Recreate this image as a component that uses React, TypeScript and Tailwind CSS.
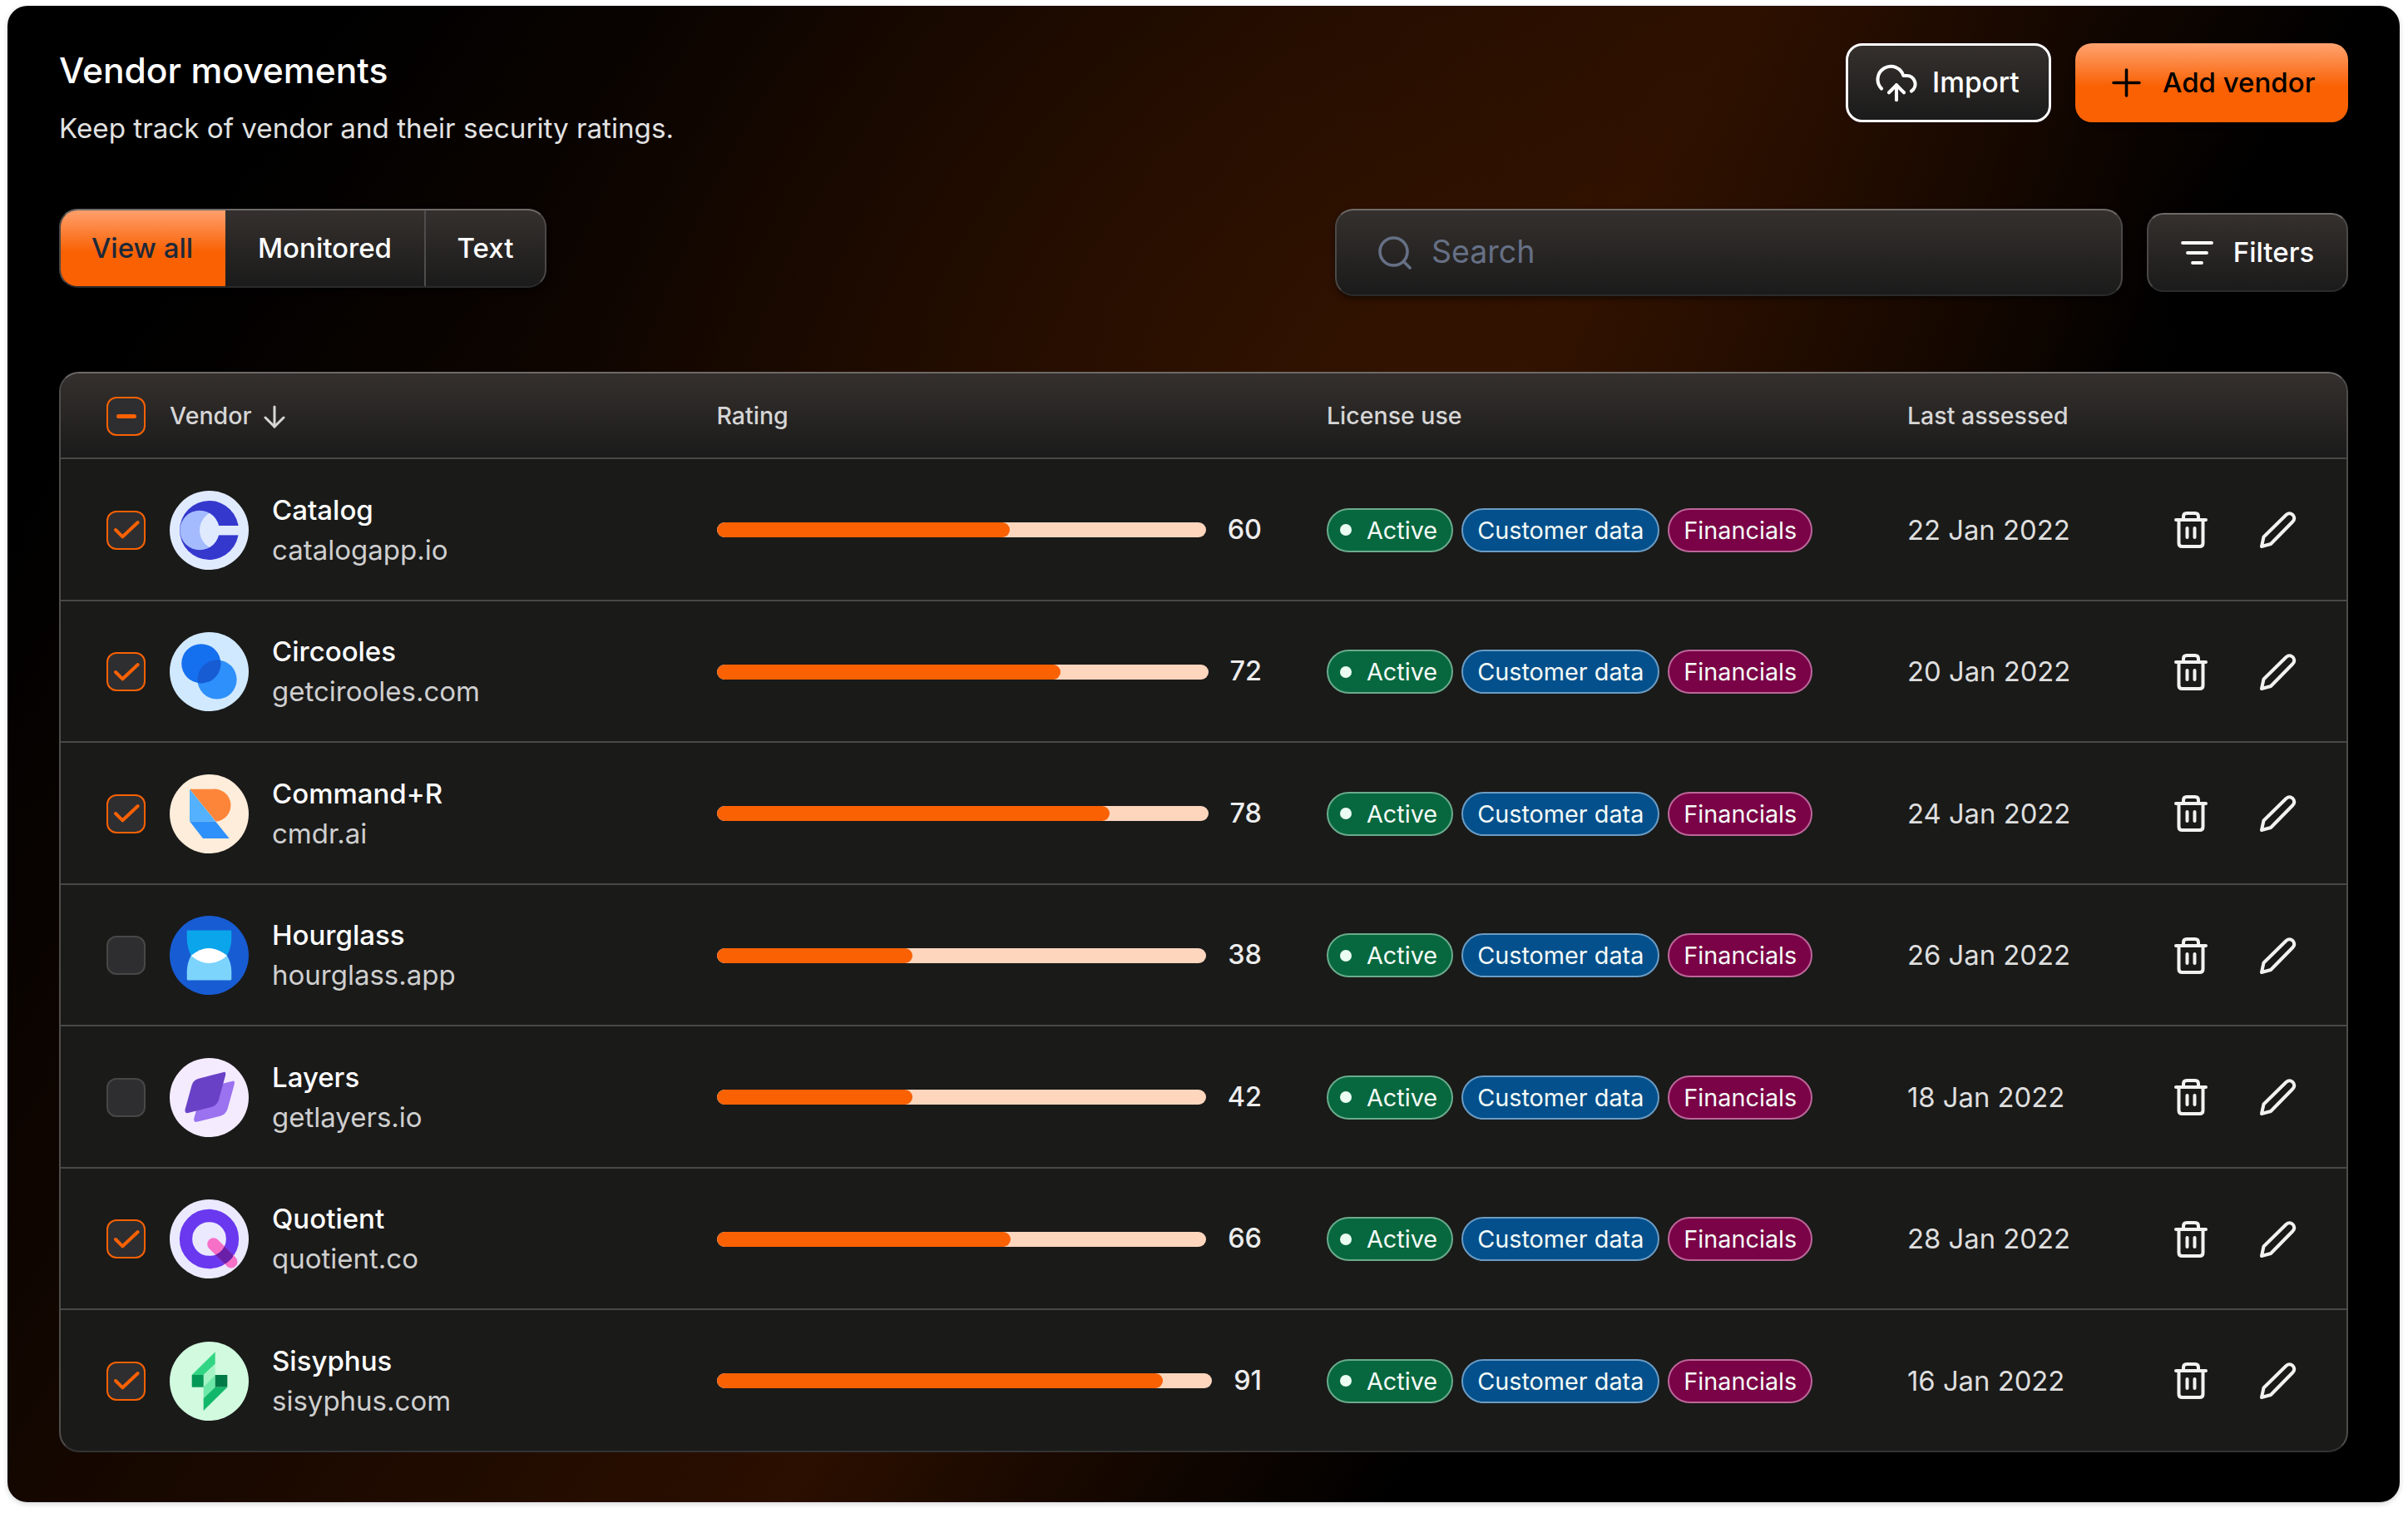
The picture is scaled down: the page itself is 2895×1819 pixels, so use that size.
import { CloudUpload, Plus } from "lucide-react";

const rows = [
  { name: "Catalog", site: "catalogapp.io", rating: 60, fill: 60, date: "22 Jan 2022", checked: true, logo: "catalog" },
  { name: "Circooles", site: "getcirooles.com", rating: 72, fill: 70, date: "20 Jan 2022", checked: true, logo: "circooles" },
  { name: "Command+R", site: "cmdr.ai", rating: 78, fill: 80, date: "24 Jan 2022", checked: true, logo: "command" },
  { name: "Hourglass", site: "hourglass.app", rating: 38, fill: 40, date: "26 Jan 2022", checked: false, logo: "hourglass" },
  { name: "Layers", site: "getlayers.io", rating: 42, fill: 40, date: "18 Jan 2022", checked: false, logo: "layers" },
  { name: "Quotient", site: "quotient.co", rating: 66, fill: 60, date: "28 Jan 2022", checked: true, logo: "quotient" },
  { name: "Sisyphus", site: "sisyphus.com", rating: 91, fill: 90, date: "16 Jan 2022", checked: true, logo: "sisyphus" },
];

const Logo = ({ kind }: { kind: string }) => {
  const bg: Record<string, string> = {
    catalog: "#e0eaff",
    circooles: "#d1e9ff",
    command: "#feedda",
    hourglass: "#175cd3",
    layers: "#f4ebff",
    quotient: "#ebe9fe",
    sisyphus: "#d1fadf",
  };
  return (
    <svg width="95" height="95" viewBox="0 0 95 95" className="shrink-0">
      <circle cx="47.5" cy="47.5" r="47.5" fill={bg[kind]} />
      {kind === "catalog" && (
        <>
          <clipPath id="cat-clip">
            <circle cx="36" cy="47.5" r="23.7" />
          </clipPath>
          <circle cx="47.5" cy="47.5" r="35.5" fill="#3538cd" />
          <circle cx="36" cy="47.5" r="23.7" fill="#a4bcfd" />
          <circle cx="59.7" cy="47.5" r="23.7" fill="#e0eaff" clipPath="url(#cat-clip)" />
          <rect x="58" y="42" width="28" height="11.4" fill="#e0eaff" />
        </>
      )}
      {kind === "circooles" && (
        <>
          <clipPath id="cir-clip">
            <circle cx="37.8" cy="37.8" r="23.6" />
          </clipPath>
          <circle cx="57" cy="57" r="23.6" fill="#2e90fa" />
          <circle cx="37.8" cy="37.8" r="23.6" fill="#1570ef" />
          <circle cx="57" cy="57" r="23.6" fill="#175cd3" clipPath="url(#cir-clip)" />
        </>
      )}
      {kind === "command" && (
        <>
          <path d="M24 17.7H52A19.5 19.5 0 0 1 55.7 56.7Z" fill="#fd853a" />
          <path d="M24 17.7L55.3 56.7H24Z" fill="#53b1fd" />
          <path d="M24.3 56.7L40 77H71.7L55.3 56.7Z" fill="#2e90fa" />
        </>
      )}
      {kind === "hourglass" && (
        <>
          <path d="M22 17.6H73Q74.3 17.6 74.3 19V28Q74 38 69 48Q47.5 66 25.7 48Q21 38 20.7 28V19Q20.7 17.6 22 17.6Z" fill="#0ba5ec" />
          <path d="M25.7 48Q47.5 30 69 48Q74 56 74.3 67V76Q74.3 77.4 73 77.4H22Q20.7 77.4 20.7 76V67Q21 56 25.7 48Z" fill="#7cd4fd" />
          <path d="M25.7 48Q47.5 30 69 48Q47.5 66 25.7 48Z" fill="#ffffff" />
        </>
      )}
      {kind === "layers" && (
        <>
          <path d="M75.7 27.7L44.7 35.7Q38.7 37.7 37.2 43.7L29.2 72.7Q28.7 77.7 32.7 76.7L60.7 69.7Q67.7 67.7 69.7 60.7L77.7 31.7Q78.7 26.7 75.7 27.7Z" fill="#9b72f0" />
          <path d="M65 17L34 25Q28 27 26.5 33L18.5 62Q18 67 22 66L50 59Q57 57 59 50L67 21Q68 16 65 17Z" fill="#6941c6" />
        </>
      )}
      {kind === "quotient" && (
        <>
          <mask id="quo-mask">
            <circle cx="47.5" cy="47.5" r="28" fill="none" stroke="#ffffff" strokeWidth="15.3" />
          </mask>
          <circle cx="47.5" cy="47.5" r="28" fill="none" stroke="#6938ef" strokeWidth="15.3" />
          <line x1="52.7" y1="53.7" x2="74" y2="75" stroke="#f670c7" strokeWidth="15" strokeLinecap="round" />
          <line x1="52.7" y1="53.7" x2="74" y2="75" stroke="#6a1fa8" strokeWidth="15" strokeLinecap="round" mask="url(#quo-mask)" />
        </>
      )}
      {kind === "sisyphus" && (
        <>
          <path d="M54.7 12.3L26.7 40H40.7L54.7 26.7Z" fill="#32d583" />
          <path d="M40.7 40L54.7 26.7V40L40.7 54.7Z" fill="#a6f4c5" />
          <path d="M40.7 54.7L54.7 40V54.7L40.7 68.3Z" fill="#6ce9a6" />
          <rect x="26.7" y="40" width="14" height="14.7" fill="#039855" />
          <rect x="54.7" y="40" width="14.6" height="14.7" fill="#027a48" />
          <path d="M69.3 54.7H54.7L40.7 68.3V83Z" fill="#12b76a" />
        </>
      )}
    </svg>
  );
};

const Checkbox = ({ state }: { state: "on" | "off" | "some" }) => (
  <div
    className={`w-[47px] h-[47px] shrink-0 rounded-[12px] border-[2.5px] bg-[#2e2e30] flex items-center justify-center ${
      state === "off" ? "border-[#474747]" : "border-[#f96103]"
    }`}
  >
    {state === "on" && (
      <svg width="42" height="42" viewBox="0 0 42 42" fill="none">
        <path d="M8 21L16.4 29.3L34.7 12" stroke="#f96103" strokeWidth="4" strokeLinecap="round" strokeLinejoin="round" />
      </svg>
    )}
    {state === "some" && <div className="w-[24px] h-[5px] rounded-full bg-[#f96103]" />}
  </div>
);

const Tag = ({ tone, dot, label }: { tone: string; dot?: boolean; label: string }) => (
  <div className={`h-[53px] rounded-full border-2 flex items-center text-[28.8px] text-[#f5fbf7] ${dot ? "pl-[14px] pr-[17px]" : "px-[17px]"} ${tone}`}>
    {dot && <span className="w-[14px] h-[14px] rounded-full bg-[#ecfdf3] mr-[18px]" />}
    {label}
  </div>
);

const TrashIcon = () => (
  <svg width="40" height="44" viewBox="0 0 40 44" fill="none" stroke="#f2f2f2" strokeWidth="4" strokeLinecap="round" strokeLinejoin="round">
    <path d="M2 10H38" />
    <path d="M11 10V6Q11 2 15 2H25Q29 2 29 6V10" />
    <path d="M5.5 10V38Q5.5 42 9.5 42H30.5Q34.5 42 34.5 38V10" />
    <path d="M15.5 20V31" />
    <path d="M24.5 20V31" />
  </svg>
);

const PencilIcon = () => (
  <svg width="44" height="44" viewBox="0 0 44 44" fill="none" stroke="#f2f2f2" strokeWidth="4" strokeLinecap="round" strokeLinejoin="round">
    <path d="M2 42L4.5 30.5L31.5 4Q35.5 0.5 39.5 4Q43 8 39.5 12L13 39Z" />
  </svg>
);

const FilterIcon = () => (
  <svg width="39" height="30" viewBox="0 0 39 30" fill="none" stroke="#ffffff" strokeWidth="3.8" strokeLinecap="round">
    <path d="M2 3H37" />
    <path d="M8 15H31" />
    <path d="M14 27H25" />
  </svg>
);

const SearchIcon = () => (
  <svg width="40" height="40" viewBox="0 0 40 40" fill="none" stroke="#667085" strokeWidth="3.6" strokeLinecap="round">
    <circle cx="18.5" cy="18.5" r="16.5" />
    <path d="M30.5 30.5L38 38" />
  </svg>
);

const grid = "grid grid-cols-[788.5px_733.5px_698px_1fr] items-center";

export default function App() {
  return (
    <div className="bg-white pt-[7px] pl-[9px] pr-[10px] pb-[13px] font-['Inter',sans-serif]">
      <div className="h-[1799px] rounded-[24px] px-[62px] pt-[45px] shadow-[0_2px_6px_rgba(16,24,40,0.18)] bg-[radial-gradient(ellipse_at_57%_24%,rgba(58,22,0,0.55),transparent_42%),linear-gradient(123deg,#000000_10%,#2b0f00_52%,#000000_70%)]">
        <div className="flex justify-between items-start h-[95px]">
          <div>
            <h1 className="text-[42.6px] leading-[60px] font-medium text-white mt-[3px]">Vendor movements</h1>
            <p className="text-[33.2px] leading-[48px] text-[#e2e2e2] mt-[14.5px]">Keep track of vendor and their security ratings.</p>
          </div>
          <div className="flex gap-[29px]">
            <button className="h-[95px] w-[247px] rounded-[20px] border-[3px] border-white bg-linear-to-b from-[#35302d] to-[#1b1b1b] flex items-center pl-[31px] gap-[16px] text-[33.5px] font-medium text-white">
              <CloudUpload size={54} strokeWidth={1.8} />
              Import
            </button>
            <button className="h-[95px] w-[328px] rounded-[20px] bg-[linear-gradient(180deg,#ffa270_0%,#f96103_55%)] flex items-center pl-[35px] gap-[17px] text-[33px] font-medium text-black shadow-[0_3px_6px_rgba(0,0,0,0.4)]">
              <Plus size={53} strokeWidth={1.6} />
              Add vendor
            </button>
          </div>
        </div>

        <div className="mt-[104px] flex items-center justify-between">
          <div className="flex h-[95px] self-start rounded-[22px] border-2 border-[#4b4846] border-t-[#6e6a67] border-b-[#2b2b2b] overflow-hidden bg-linear-to-b from-[#35302d] to-[#1b1b1b] text-[33px] font-medium text-white shadow-[0_3px_6px_rgba(0,0,0,0.5)]">
            <div className="-my-[2px] -ml-[2px] w-[200px] flex items-center justify-center bg-[linear-gradient(180deg,#ffa270_0%,#f96103_55%)] text-[#1d2939]">View all</div>
            <div className="w-[241px] flex items-center justify-center border-r-2 border-[#4f4d4b]">Monitored</div>
            <div className="w-[143px] flex items-center justify-center">Text</div>
          </div>
          <div className="flex items-center gap-[29px]">
            <div className="w-[947px] h-[105px] rounded-[22px] border-2 border-[#4b4846] border-t-[#6e6a67] border-b-[#2b2b2b] bg-linear-to-b from-[#35302d] to-[#1b1b1b] flex items-center pl-[50px] gap-[24px] text-[37.5px] text-[#667085] shadow-[0_3px_6px_rgba(0,0,0,0.5)]">
              <SearchIcon />
              Search
            </div>
            <div className="w-[242px] h-[95px] rounded-[20px] border-2 border-[#4b4846] border-t-[#6e6a67] border-b-[#2b2b2b] bg-linear-to-b from-[#35302d] to-[#1b1b1b] flex items-center justify-center gap-[24px] text-[33px] font-medium text-white shadow-[0_3px_6px_rgba(0,0,0,0.5)]">
              <FilterIcon />
              Filters
            </div>
          </div>
        </div>

        <div className="mt-[91px] rounded-[24px] overflow-hidden border-2 border-[#4f4d4b] border-t-[#6e6a67] border-b-[#333333] bg-[#1a1a19]">
          <div className={`${grid} h-[101px] pt-[2px] bg-linear-to-b from-[#35302d] to-[#1b1b1b] text-[28.5px] font-medium text-[#d6d6d6]`}>
            <div className="flex items-center pl-[55px]">
              <Checkbox state="some" />
              <span className="ml-[29px]">Vendor</span>
              <svg width="28" height="28" viewBox="0 0 28 28" fill="none" stroke="#d6d6d6" strokeWidth="3" strokeLinecap="round" strokeLinejoin="round" className="ml-[14px]">
                <path d="M14 2V26" />
                <path d="M3 15L14 26L25 15" />
              </svg>
            </div>
            <div>Rating</div>
            <div>License use</div>
            <div>Last assessed</div>
          </div>
          {rows.map((row) => (
            <div key={row.name} className={`${grid} h-[170.5px] pt-[2px] border-t-[2.5px] border-[#484848]`}>
              <div className="flex items-center pl-[55px]">
                <Checkbox state={row.checked ? "on" : "off"} />
                <div className="ml-[29px]">
                  <Logo kind={row.logo} />
                </div>
                <div className="ml-[28px]">
                  <div className="text-[33px] leading-[47px] font-medium text-white">{row.name}</div>
                  <div className="text-[33px] leading-[48px] text-[#cfcfcf]">{row.site}</div>
                </div>
              </div>
              <div className="flex items-center gap-[26px] pr-[78px]">
                <div className="flex-1 h-[18px] rounded-full bg-[#fed6bd] overflow-hidden">
                  <div className="h-full rounded-full bg-[#f96103]" style={{ width: `${row.fill}%` }} />
                </div>
                <span className="text-[32.4px] font-medium text-[#ededed]">{row.rating}</span>
              </div>
              <div className="flex items-center gap-[10px]">
                <Tag tone="bg-[#07683f] border-[#6bab8c]" dot label="Active" />
                <Tag tone="bg-[#03508c] border-[#6b9cc4]" label="Customer data" />
                <Tag tone="bg-[#7a0246] border-[#bc679a]" label="Financials" />
              </div>
              <div className="flex items-center justify-between pr-[60px]">
                <span className="text-[32.8px] text-[#dedede]">{row.date}</span>
                <div className="flex items-center gap-[63px]">
                  <TrashIcon />
                  <PencilIcon />
                </div>
              </div>
            </div>
          ))}
        </div>
      </div>
    </div>
  );
}
